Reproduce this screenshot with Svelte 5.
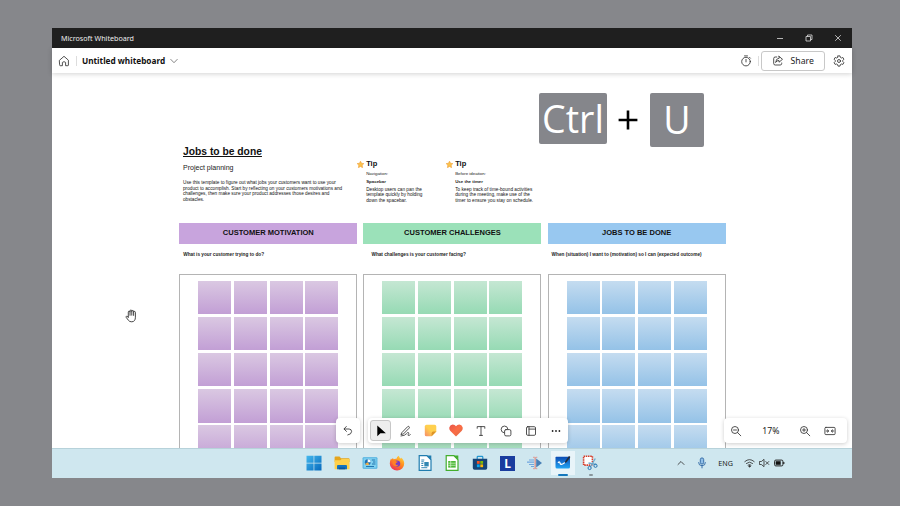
<script>
  const columns = [
    { kind: 'purple', title: 'CUSTOMER MOTIVATION', question: 'What is your customer trying to do?' },
    { kind: 'green', title: 'CUSTOMER CHALLENGES', question: 'What challenges is your customer facing?' },
    { kind: 'blue', title: 'JOBS TO BE DONE', question: 'When (situation) I want to (motivation) so I can (expected outcome)' }
  ];
  const tips = [
    { label: 'Navigation:', name: 'Spacebar', lines: ['Desktop users can pan the', 'template quickly by holding', 'down the spacebar.'] },
    { label: 'Before ideation:', name: 'Use the timer', lines: ['To keep track of time-bound activities', 'during the meeting, make use of the', 'timer to ensure you stay on schedule.'] }
  ];
  const intro = [
    'Use this template to figure out what jobs your customers want to use your',
    'product to accomplish. Start by reflecting on your customers motivations and',
    'challenges, then make sure your product addresses those desires and',
    'obstacles.'
  ];
  const notes = Array.from({ length: 20 });
</script>

<div class="desktop">
  <div class="window">
    <header class="titlebar">
      <span class="apptitle">Microsoft Whiteboard</span>
      <div class="controls">
        <svg width="8" height="8" viewBox="0 0 8 8"><path d="M1 4.500h6" /></svg>
        <svg width="8" height="8" viewBox="0 0 8 8"><path d="M1 2.500h4.500v4.500h-4.500zM2.500 2.500v-1.500h4.500v4.500h-1.500" /></svg>
        <svg width="8" height="8" viewBox="0 0 8 8"><path d="M1.200 1.200l5.600 5.600M6.800 1.200l-5.600 5.600" /></svg>
      </div>
    </header>

    <nav class="appbar">
      <svg class="home line" width="12" height="12" viewBox="0 0 12 12"><path d="M1.600 5.200L6 1.300l4.400 3.900v4.900q0 .6-.6.6H7.600V7.600Q7.600 6.800 6 6.800T4.400 7.600v3.100H2.200q-.6 0-.6-.6z" /></svg>
      <i class="sep"></i>
      <b class="docname">Untitled whiteboard</b>
      <svg class="chev" width="8" height="6" viewBox="0 0 8 6"><path d="M.5 1.100L4 4.700l3.500-3.600" /></svg>
      <span class="grow"></span>
      <svg class="line" width="12" height="12" viewBox="0 0 12 12"><circle cx="6" cy="6.600" r="4.300" /><path d="M6 4.400v2.500M4.500.9h3M9.500 2.300l.9.9" /></svg>
      <i class="sep two"></i>
      <div class="share">
        <svg class="line" width="12" height="12" viewBox="0 0 12 12"><path d="M4.800 2H3.200Q1.700 2 1.700 3.500v5Q1.700 10 3.200 10h5Q9.700 10 9.700 8.500V8M7 1.300l3.500 3L7 7.200V5.500Q4.700 5.400 3.600 7.500 3.900 3.400 7 3.100z" /></svg>
        <span>Share</span>
      </div>
      <svg class="gear line" width="12" height="12" viewBox="0 0 12 12"><path d="M5 .9h2l.4 1.500 1 .6 1.500-.5 1 1.700-1.100 1.100v1.300l1.100 1.100-1 1.700-1.500-.4-1 .6-.4 1.500H5l-.4-1.500-1-.6-1.500.4-1-1.700 1.100-1.100V5.300L1.100 4.200l1-1.700 1.500.5 1-.6z" /><circle cx="6" cy="6" r="1.500" /></svg>
    </nav>

    <main class="canvas">
      <div class="board">
        <div class="top">
          <section class="intro">
            <h1>Jobs to be done</h1>
            <h2>Project planning</h2>
            <p>{#each intro as l}<span>{l}</span>{/each}</p>
          </section>
          {#each tips as tip}
            <section class="tip">
              <svg width="7" height="7" viewBox="0 0 10 10"><path d="M5 .3l1.500 3 3.300.4-2.400 2.300.6 3.500L5 7.900 2 9.500l.6-3.500L.2 3.700l3.300-.4z" fill="#fbc24a" stroke="#f0a340" stroke-width=".9" stroke-linejoin="round" /></svg>
              <div>
                <h3>Tip</h3>
                <small>{tip.label}</small>
                <strong>{tip.name}</strong>
                <p>{#each tip.lines as l}<span>{l}</span>{/each}</p>
              </div>
            </section>
          {/each}
        </div>
        <div class="columns">
          {#each columns as c}
            <section class="column {c.kind}">
              <h4>{c.title}</h4>
              <p class="question">{c.question}</p>
              <div class="frame">
                {#each notes as _}<i></i>{/each}
              </div>
            </section>
          {/each}
        </div>
      </div>

      <div class="keys">
        <kbd class="ctrl">Ctrl</kbd>
        <svg width="20" height="20" viewBox="0 0 20 20"><path d="M10 .6v18.800M.6 10h18.800" stroke="#000" stroke-width="2.600" /></svg>
        <kbd class="u">U</kbd>
      </div>

      <svg class="hand" width="13" height="14" viewBox="0 0 13 14"><path d="M3.300 8.200V3.100q0-1 .8-1t.9 1V2q0-1 .9-1t.9 1v.4q0-.9.9-.9t.9.9v.8q.1-.8.9-.8t.9 1v4.800q0 4.400-3.600 4.600-2.300.1-3.400-1.500L1.200 8.400q-.5-.8.2-1.100t1.300.3zM5 3v3.300M6.800 2.400v3.800M8.600 3v3.400" fill="#fff" stroke="#333" stroke-width=".9" stroke-linejoin="round" stroke-linecap="round" /></svg>

      <div class="panel undo">
        <svg class="line" width="12" height="12" viewBox="0 0 12 12"><path d="M4.300 1.500L2 4l2.500 2.400M2.200 4h4.900Q9.600 4.100 9.600 6.600 9.500 9.300 5.800 10" /></svg>
      </div>

      <div class="panel tools">
        <span class="selected"><svg width="12" height="12" viewBox="0 0 12 12"><path d="M2.300.5v10.800L5.400 8.200h5.500z" fill="#000" /></svg></span>
        <span><svg class="line" width="12" height="12" viewBox="0 0 12 12"><path d="M2 7.500L7.600 1.700q.8-.7 1.500 0t0 1.500L3.500 8.900l-2.200.6zM1 11q4.300-.4 5.600-2.400 1.200-1.700 2-.9.500.5-.3 1.600t.2 1.200q.7.100 1.800-.8" /></svg></span>
        <span><svg width="13" height="13" viewBox="0 0 13 13"><path d="M2.500.8h8.200q1.600 0 1.600 1.600v5.200L7.600 12.300H2.500Q.8 12.300.8 10.700V2.400Q.8.800 2.500.8z" fill="url(#noteFill)" /><path d="M7.600 12.300V9.200q0-1.600 1.600-1.600h3.100z" fill="#de9427" /><defs><linearGradient id="noteFill" x1="1" y1="0" x2="0" y2="1"><stop offset=".5" stop-color="#ffd04e" /><stop offset="1" stop-color="#f58a6c" /></linearGradient></defs></svg></span>
        <span><svg width="14" height="13" viewBox="0 0 14 13"><path d="M7 12.500L1.400 6.900Q-.1 5.100.4 3.200 1.200.7 3.700.6 5.900.6 7 2.300 8.100.6 10.300.6q2.500.1 3.300 2.600.5 1.900-1 3.700z" fill="url(#heartFill)" /><defs><linearGradient id="heartFill" x1="0" y1="0" x2="1" y2="1"><stop stop-color="#e7554a" /><stop offset=".5" stop-color="#fb6d45" /><stop offset="1" stop-color="#da6a48" /></linearGradient></defs></svg></span>
        <span><svg class="line" width="12" height="12" viewBox="0 0 12 12"><path d="M2.200 3.300V1.600h7.600v1.700M6 1.600v8.800M4.500 10.400h3" /></svg></span>
        <span><svg class="line" width="12" height="12" viewBox="0 0 12 12"><path d="M4 7.800A3.400 3.400 0 1 1 7.900 4" /><rect x="4.600" y="4.600" width="6.300" height="6.300" rx="1.400" /></svg></span>
        <span><svg class="line" width="12" height="12" viewBox="0 0 12 12"><rect x="1.500" y="1.700" width="9" height="8.600" rx="1.200" /><path d="M4 1.700v8.600M4 4.100h6.500" /></svg></span>
        <span><svg width="12" height="12" viewBox="0 0 12 12" fill="#222"><circle cx="2.600" cy="6" r=".9" /><circle cx="6" cy="6" r=".9" /><circle cx="9.400" cy="6" r=".9" /></svg></span>
      </div>

      <div class="panel zoom">
        <svg class="line" width="12" height="12" viewBox="0 0 12 12"><circle cx="5" cy="5" r="3.500" /><path d="M7.600 7.600l3.200 3.200M3.500 5h3" /></svg>
        <span>17%</span>
        <svg class="line" width="12" height="12" viewBox="0 0 12 12"><circle cx="5" cy="5" r="3.500" /><path d="M7.600 7.600l3.200 3.200M3.500 5h3M5 3.500v3" /></svg>
        <svg class="line fit" width="12" height="12" viewBox="0 0 12 12"><rect x=".9" y="2.400" width="10.200" height="7.200" rx="1" /><path d="M2.200 6h2.400M3.300 4.800L4.700 6 3.300 7.200M9.800 6H7.400M8.700 4.800L7.300 6l1.400 1.200" /></svg>
      </div>
    </main>

    <footer class="taskbar">
      <div class="apps">
        <span><svg width="16" height="16" viewBox="0 0 16 16"><defs><linearGradient id="winFill" x1="0" y1="0" x2="1" y2="1"><stop stop-color="#45b9ee" /><stop offset="1" stop-color="#0669bd" /></linearGradient></defs><path d="M.5.800h7.100v7H.5zM8.300.8h7.200v7H8.300zM.5 8.500h7.100v7H.5zM8.300 8.500h7.200v7H8.300z" fill="url(#winFill)" /></svg></span>
        <span><svg width="16" height="16" viewBox="0 0 16 16"><path d="M.6 2.500Q.6 1.600 1.500 1.600h4l1.500 1.700h7.700q.8 0 .8.800v3H.6z" fill="#e5a51d" /><path d="M.6 5.300h5.700L7.600 4h7.900v10.300H.6z" fill="#ffd04a" /><path d="M3 14.300v-3.300q0-1 1-1h8q1 0 1 1v3.300z" fill="#1473bd" /><path d="M4.800 12.500h6.400v1.800H4.800z" fill="#0d579d" /></svg></span>
        <span><svg width="16" height="16" viewBox="0 0 16 16"><rect x=".6" y="2.300" width="14.800" height="11.400" rx="1" fill="#4baee0" /><rect x="1.500" y="3.200" width="13" height="9.600" fill="#80d1f0" /><circle cx="5.700" cy="7.200" r="2.900" fill="#1c70b6" /><path d="M5.700 7.200V4.300a2.900 2.900 0 0 1 2.900 2.900z" fill="#fff" /><path d="M3 9l2.700-1.800 1.700 2.300Q4.800 11 3 9z" fill="#f4ae46" /><path d="M9.800 5h3.500M11 7h2.500M10 9h3.500M4 11.500h8" stroke="#176ba9" stroke-width=".9" /></svg></span>
        <span><svg width="16" height="16" viewBox="0 0 16 16"><defs><linearGradient id="foxFill" x1=".8" y1="0" x2=".2" y2="1"><stop stop-color="#ffd83d" /><stop offset=".45" stop-color="#ff8a20" /><stop offset="1" stop-color="#ed265c" /></linearGradient></defs><path d="M2 3.600l.5 1L4 2.900l.5 1.400q1.500-.7 3-.5Q7.700 1.700 9.800.7q.3 2 2.200 3 .3-.7 0-1.300 3.200 2.400 3.200 6.100a7.200 7 0 0 1-14.400.2Q.8 5.900 2 3.600z" fill="url(#foxFill)" /><circle cx="8" cy="8.600" r="3.200" fill="#793bc4" /><path d="M3.700 5.500q2-.8 3.800.9l1.300.1q-.3 1.200-2 1.500-.6 1.800 1 2 .8.100 1.700-.4-1.100 2.400-3.500 1.600-3.300-1.200-2.300-5.700z" fill="#ff8126" /></svg></span>
        <span><svg width="16" height="16" viewBox="0 0 16 16"><path d="M2.200.7h7.600L14 4.900v10.400H2.200z" fill="#fff" stroke="#207daf" stroke-width="1.200" /><path d="M9.700.4h4.600V5z" fill="#207daf" /><path d="M4.300 5h3M4.300 6.800h2.500M4.300 12.700h6M4.300 8.500h2M4.300 10.500h2" stroke="#207daf" stroke-width=".9" /><path d="M7.300 7h4.400v4.400H7.300z" fill="#3287b2" /></svg></span>
        <span><svg width="16" height="16" viewBox="0 0 16 16"><path d="M2.200.7h7.600L14 4.900v10.400H2.200z" fill="#fff" stroke="#43ae2e" stroke-width="1.200" /><path d="M9.700.4h4.600V5z" fill="#43ae2e" /><path d="M4.200 6h7.500v6.600H4.200z" fill="#4cb837" /><path d="M4.200 8.200h7.500M4.200 10.300h7.500M6.700 6v6.500" stroke="#d9f5ce" stroke-width=".7" /></svg></span>
        <span><svg width="16" height="16" viewBox="0 0 16 16"><path d="M5.200 4V2.200q0-.8.8-.8h4q.8 0 .8.800V4" fill="none" stroke="#2396d0" stroke-width="1.200" /><path d="M.8 3.800h14.400v9.300q0 1.700-1.700 1.700h-11q-1.700 0-1.700-1.700z" fill="#164477" /><path d="M4.900 6h2.800v2.800H4.900z" fill="#f35325" /><path d="M8.300 6h2.800v2.800H8.300z" fill="#81bc06" /><path d="M4.900 9.400h2.800v2.800H4.900z" fill="#05a6f0" /><path d="M8.300 9.400h2.800v2.800H8.300z" fill="#ffba08" /></svg></span>
        <span><b class="ell">L</b></span>
        <span><svg width="16" height="16" viewBox="0 0 16 16"><path d="M2 5h5M0 7.200h7M2 9.500h5M4 11.500h3" stroke="#70a5df" stroke-width="1.200" /><path d="M9.200 3.500L15 8l-5.800 4.500z" fill="#487fb6" /><path d="M6 2.300h1.500q.7 0 .7.700v10q0 .7-.7.700H6M10.300 2.300H8.900q-.7 0-.7.700v10q0 .7.7.7h1.400" fill="none" stroke="#dc9993" /></svg></span>
        <span class="active"><svg width="16" height="16" viewBox="0 0 16 16"><defs><linearGradient id="wbFill" x1="0" y1="0" x2="0" y2="1"><stop stop-color="#0b4bb3" /><stop offset="1" stop-color="#22a5f3" /></linearGradient></defs><path d="M1 1.800h14v10.200q0 1.500-1.500 1.500H2Q.5 13.500.5 12V2.500z" fill="url(#wbFill)" /><path d="M3 8q1.500-2.200 2 0t3 .8l2-1.200" fill="none" stroke="#fff" stroke-width="1.200" /><path d="M9.700 8l.5-1.800L14 1l1.400 1-3.800 5.200z" fill="#252c38" /></svg></span>
        <span class="running"><svg width="16" height="16" viewBox="0 0 16 16"><rect x="1.600" y="1.300" width="8.800" height="8.800" fill="#fff" stroke="#d53d2b" stroke-width="1.600" stroke-dasharray="1.500 .7" /><path d="M13.300 3.500L8.400 12M14.500 9.500L6.500 8" stroke="#6da9cc" stroke-width="1.300" /><circle cx="7.600" cy="13" r="1.600" fill="none" stroke="#2b77b4" /><circle cx="13.500" cy="10.800" r="1.600" fill="none" stroke="#2b77b4" /></svg></span>
      </div>
      <div class="tray">
        <svg class="line caret" width="8" height="6" viewBox="0 0 8 6"><path d="M1 4.500L4 1.500l3 3" /></svg>
        <svg class="mic" width="10" height="12" viewBox="0 0 10 12" fill="none" stroke="#386fa9"><rect x="3.300" y=".9" width="3.400" height="6.200" rx="1.700" fill="#91bfe8" /><path d="M1.600 5.200q0 3.500 3.400 3.500t3.400-3.500M5 8.700v2.600" /></svg>
        <span>ENG</span>
        <svg class="line wifi" width="11" height="10" viewBox="0 0 11 10"><path d="M.8 3.600q4.700-4.200 9.400 0M2.400 5.400q3.100-2.700 6.200 0M4 7.100q1.500-1.300 3 0" /><circle cx="5.500" cy="8.300" r=".7" fill="#222" /></svg>
        <svg class="line vol" width="11" height="10" viewBox="0 0 11 10"><path d="M.8 3.500h1.600L5 1.300v7.400L2.400 6.500H.8zM6.800 3.500l3 3M9.800 3.500l-3 3" /></svg>
        <svg class="bat" width="11" height="8" viewBox="0 0 11 8"><rect x=".6" y="1.100" width="8.300" height="5.800" rx="1.200" fill="none" stroke="#222" /><path d="M1.700 2.200h5v3.600h-5z" fill="#111" /><path d="M9.800 3v2" stroke="#222" stroke-width="1.200" /></svg>
      </div>
    </footer>
  </div>
</div>

<style>
  :global(body) { margin: 0; background: #86878b; }
  .desktop { width: 900px; height: 506px; box-sizing: border-box; padding: 28px 48px 28px 52px; background: #86878b; overflow: hidden; font-family: "Noto Sans", sans-serif; color: #222; }
  .window { height: 450px; display: flex; flex-direction: column; background: #fff; }
  svg { display: block; flex: none; }
  .line { fill: none; stroke: #333; stroke-width: .85; stroke-linecap: round; stroke-linejoin: round; }
  h1, h2, h3, h4, p { margin: 0; }

  .titlebar { flex: none; height: 20px; display: flex; align-items: center; justify-content: space-between; background: #1f1f1f; color: #eee; padding: 0 10.500px 0 9px; }
  .apptitle { font-size: 7.150px; line-height: 20px; white-space: nowrap; }
  .controls { display: flex; gap: 21px; }
  .controls svg { fill: none; stroke: #ddd; stroke-width: .8; }

  .appbar { position: relative; z-index: 2; flex: none; height: 25px; display: flex; align-items: center; box-shadow: 0 1px 5px rgba(0,0,0,.18); background: #fff; padding: 0 7px 0 6.400px; }
  .sep { width: 1px; height: 10px; background: #ddd; margin: 0 5px 0 5.600px; }
  .sep.two { margin: 0 2px 0 6px; }
  .docname { font-size: 8.220px; line-height: 24px; color: #111; white-space: nowrap; }
  .chev { fill: none; stroke: #666; stroke-width: .8; margin-left: 4.500px; }
  .grow { flex: 1; }
  .share { box-sizing: border-box; width: 64px; height: 20px; border: 1px solid #c8c8c8; border-radius: 3px; display: flex; align-items: center; padding-left: 10px; gap: 6.500px; font-size: 8.700px; }
  .gear { margin-left: 8px; }

  .canvas { position: relative; flex: 1; min-height: 0; overflow: hidden; background: #fff; font-family: "Liberation Sans", Arial, sans-serif; }
  .board { padding: 0 0 0 127.300px; }
  .top { display: flex; height: 150px; box-sizing: border-box; padding-top: 72px; }
  .intro { width: 174px; padding-left: 3.700px; white-space: nowrap; }
  h1 { font-size: 10.300px; line-height: 13px; text-decoration: underline; text-underline-offset: 1px; color: #111; }
  h2 { font-size: 7.050px; line-height: 9px; font-weight: 400; margin-top: 4.500px; }
  p span { display: block; }
  .intro p { font-size: 4.710px; line-height: 5.500px; margin-top: 8.500px; color: #111; }
  .tip { width: 89px; padding-top: 14px; display: flex; gap: 2.200px; white-space: nowrap; box-sizing: border-box; }
  .tip svg { margin-top: 2px; }
  .tip h3 { font-size: 7.500px; line-height: 10.500px; color: #111; }
  .tip small, .tip strong { display: block; font-size: 4.400px; line-height: 8px; }
  .tip p { font-size: 4.700px; line-height: 5.500px; margin-top: 1.100px; color: #111; }

  .columns { display: flex; gap: 6.150px; }
  .column { width: 178px; flex: none; }
  h4 { height: 21px; font-size: 7.520px; line-height: 20px; text-align: center; color: #111; background: var(--head); white-space: nowrap; }
  .question { font-size: 4.720px; line-height: 8px; padding: 6.500px 4px 0; height: 23.500px; font-weight: 700; color: #222; white-space: nowrap; }
  .green .question { padding-left: 8px; }
  .frame { box-sizing: border-box; height: 200px; border: 1px solid #b4b4b4; padding: 5.500px 18.500px; display: grid; grid-template-columns: repeat(4, 33px); grid-auto-rows: 33.500px; gap: 2.700px; align-content: start; justify-content: center; }
  .frame i { background: linear-gradient(var(--from), var(--to)); }
  .purple { --head: #c8a4dd; --from: #dac8e2; --to: #c29fd5; }
  .green { --head: #9be1b9; --from: #c5e7d3; --to: #96dab4; }
  .blue { --head: #98c8f0; --from: #c5dcf0; --to: #94c2e7; }

  .keys { position: absolute; left: 487px; top: 20px; display: flex; font-family: "Open Sans", sans-serif; }
  kbd { font-family: inherit; background: #85868b; color: #fff; border-radius: 2px; text-align: center; height: 51px; font-size: 37.500px; line-height: 51px; }
  .ctrl { width: 68px; }
  .u { width: 54px; height: 54px; line-height: 53px; }
  .keys svg { margin: 17px 12px 0 11px; }
  .hand { position: absolute; left: 73.400px; top: 236px; }

  .panel { position: absolute; top: 345px; height: 25px; border-radius: 4px; background: #fff; box-shadow: 0 1px 4px rgba(0,0,0,.2); display: flex; align-items: center; }
  .undo { left: 284px; width: 24px; justify-content: center; }
  .tools { left: 316px; width: 200px; }
  .tools span { width: 25px; height: 21px; display: grid; place-items: center; box-sizing: border-box; }
  .tools .selected { width: 21px; margin: 0 2px; background: #eee; border: 1px solid #c7c7c7; border-radius: 3px; }
  .zoom { left: 672px; width: 123px; box-sizing: border-box; padding-left: 6.400px; font: 8.700px "Noto Sans", sans-serif; }
  .zoom span { width: 57px; text-align: center; }
  .zoom .fit { margin-left: 13px; }

  .taskbar { position: relative; flex: none; height: 30px; box-sizing: border-box; border-top: 1px solid #b7d2da; background: #cfe7ef; display: flex; justify-content: space-between; padding: 0 67px 1px 248.700px; }
  .apps { display: flex; align-items: center; }
  .apps span { position: relative; width: 27.600px; height: 28px; display: grid; place-items: center; }
  .ell { width: 15px; height: 15px; background: #193c9e; color: #fff; font: 700 12px/15px "Noto Sans", sans-serif; text-align: center; }
  .active { background: linear-gradient(#e8f4f9, #e8f4f9) center / 24px 24px no-repeat; }
  .active::after, .running::after { content: ""; position: absolute; bottom: 1px; left: 9px; width: 10px; height: 2px; border-radius: 1px; background: #1678bd; }
  .running::after { left: 12px; width: 4px; background: #89969c; }
  .tray { display: flex; align-items: center; font-size: 7.200px; }
  .mic { margin: 0 11px 0 12px; }
  .wifi { margin-left: 11px; }
  .vol { margin-left: 4px; }
  .bat { margin-left: 4px; }
</style>
